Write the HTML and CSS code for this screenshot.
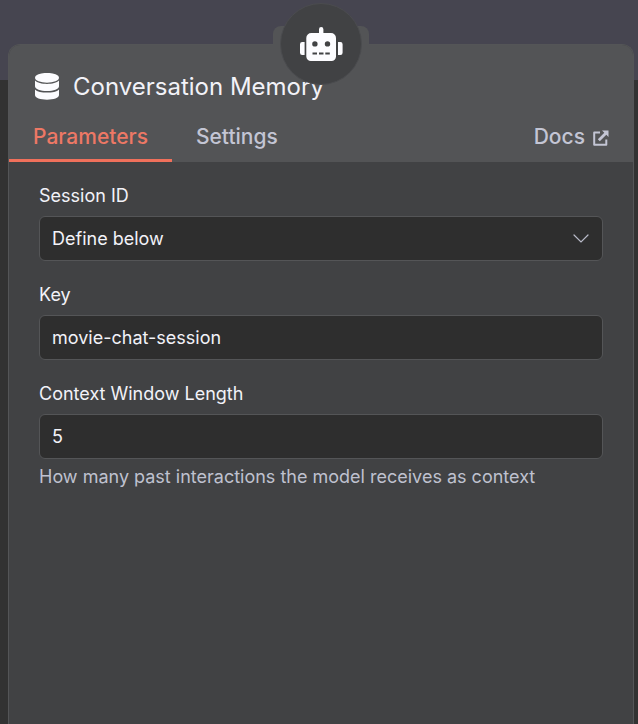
FILE: index.html
```html
<!DOCTYPE html>
<html lang="en">
<head>
<meta charset="utf-8">
<meta name="viewport" content="width=device-width, initial-scale=1">
<title>Conversation Memory</title>
<link rel="stylesheet" href="styles.css">
</head>
<body>
<main class="panel">
  <div class="notch">
    <button class="parent-node" type="button" aria-label="Open parent node">
      <svg viewBox="0 0 44 36" width="44" height="36" aria-hidden="true">
        <path fill="#fcfcff" fill-rule="evenodd" d="M20 3.200a2.200 2.200 0 0 1 4.400 0V7H32a5 5 0 0 1 5 5v18.500a4.500 4.500 0 0 1-4.500 4.500h-20.500A4.500 4.500 0 0 1 7.300 30.500V12a5 5 0 0 1 5-5H20zM15.900 15.200a2.700 2.700 0 1 0 0 5.400a2.700 2.700 0 0 0 0-5.400zM28.500 15.200a2.700 2.700 0 1 0 0 5.400a2.700 2.700 0 0 0 0-5.400zM13.500 26.500v2H18v-2zM20 26.500v2h4.500v-2zM26.300 26.500v2h4.500v-2zM5.600 16v13H3.200A2.200 2.200 0 0 1 1 26.800v-8.600A2.200 2.200 0 0 1 3.200 16zM39 16h2.400a2.200 2.200 0 0 1 2.200 2.200v8.600a2.200 2.200 0 0 1-2.200 2.200H39z"/>
      </svg>
    </button>
  </div>
  <header class="header">
    <div class="title-row">
      <svg class="title-icon" viewBox="0 0 24 28" width="24" height="28" aria-hidden="true">
        <g fill="#fcfcff">
          <ellipse cx="12" cy="4.800" rx="12" ry="4.900"/>
          <path d="M0 7.600C2 9.900 7 11 12 11S22 9.900 24 7.600V13.200c0 2.800-5.400 4.800-12 4.800S0 16 0 13.200z"/>
          <path d="M0 16.400C2 18.600 7 19.600 12 19.600s10-1 12-3.200v5.600c0 2.800-5.400 4.700-12 4.700S0 24.800 0 22z"/>
        </g>
      </svg>
      <h1 class="title">Conversation Memory</h1>
    </div>
    <nav class="tabs">
      <button class="tab tab-active" type="button">Parameters</button>
      <button class="tab" type="button">Settings</button>
      <a class="tab docs" href="#docs">Docs
        <svg class="docs-icon" viewBox="0 0 16 16" width="16" height="16" aria-hidden="true">
          <path d="M7 2.500H1.200v12.300h12.100V9.500" fill="none" stroke="currentColor" stroke-width="2" stroke-linejoin="round"/>
          <path d="M9 .5h6.500V7l-2.200-2.200-6.500 6.500-2-2 6.500-6.500z" fill="currentColor"/>
        </svg>
      </a>
    </nav>
  </header>
  <form class="fields">
    <div class="field">
      <label for="session">Session ID</label>
      <div class="select-wrap">
        <select class="control" id="session"><option>Define below</option></select>
        <svg class="chevron" viewBox="0 0 16 10" width="16" height="10" aria-hidden="true">
          <path d="M1 1l7 7 7-7" fill="none" stroke="#b9bbc9" stroke-width="1.200" stroke-linecap="round"/>
        </svg>
      </div>
    </div>
    <div class="field">
      <label for="key">Key</label>
      <input class="control" id="key" type="text" value="movie-chat-session">
    </div>
    <div class="field">
      <label for="length">Context Window Length</label>
      <input class="control" id="length" type="text" inputmode="numeric" value="5" aria-describedby="length-hint">
      <p class="hint" id="length-hint">How many past interactions the model receives as context</p>
    </div>
  </form>
</main>
</body>
</html>
```
FILE: styles.css
```css
* {
  box-sizing: border-box;
}

body {
  margin: 0;
  min-height: 100vh;
  display: flex;
  padding: 44px 4px 0 8px;
  background: linear-gradient(#464550 0 80px, #323232 80px);
  color: #f2f2f8;
  font: 18px/24px Inter, "Liberation Sans", sans-serif;
}

.panel {
  position: relative;
  flex: 1;
  min-width: 0;
  border: 1px solid #545557;
  border-bottom: 0;
  border-radius: 12px 12px 0 0;
  background: #414244;
}

/* Raised tab behind the parent node button */
.notch {
  position: absolute;
  top: -19px;
  left: 50%;
  width: 96px;
  height: 36px;
  display: flex;
  align-items: center;
  justify-content: center;
  transform: translateX(-50%);
  border-radius: 8px 8px 0 0;
  background: #535456;
}

.parent-node {
  flex: none;
  width: 82px;
  height: 82px;
  display: grid;
  place-items: center;
  padding: 0;
  border: 1px solid #4b4c4f;
  border-radius: 50%;
  background: #414244;
}

.header {
  padding-top: 24px;
  border-radius: 11px 11px 0 0;
  background: #535456;
}

.title-row {
  display: flex;
  align-items: center;
  gap: 14px;
  padding: 0 26px;
}

.title {
  margin: 0;
  font-size: 24px;
  line-height: 36px;
  font-weight: 400;
}

.tabs {
  display: flex;
  margin-top: 12px;
}

.tab {
  height: 45px;
  padding: 0 24px 2px;
  border: 0;
  border-bottom: 3px solid transparent;
  background: none;
  color: #c3c5d4;
  font: 500 21px/36px Inter, "Liberation Sans", sans-serif;
  text-decoration: none;
}

.tab-active {
  border-color: #f0705b;
  color: #ed7865;
}

.docs {
  display: flex;
  align-items: center;
  gap: 8px;
  margin-left: auto;
}

.docs-icon {
  margin-top: 2px;
}

.fields {
  display: grid;
  gap: 22px;
  padding: 22px 30px;
}

.field {
  display: grid;
}

.field label {
  margin-bottom: 8px;
}

.control {
  width: 100%;
  height: 45px;
  padding: 0 12px;
  border: 1px solid #545557;
  border-radius: 6px;
  appearance: none;
  background: #2e2e2e;
  color: #f2f2f8;
  font: inherit;
}

.select-wrap {
  display: grid;
  align-items: center;
}

.select-wrap > * {
  grid-area: 1 / 1;
}

.chevron {
  justify-self: end;
  margin-right: 14px;
  pointer-events: none;
}

.hint {
  margin: 6px 0 0;
  color: #bfc1cf;
}
```
